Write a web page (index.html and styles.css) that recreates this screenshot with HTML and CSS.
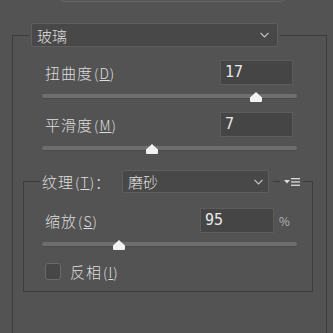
FILE: index.html
```html
<!DOCTYPE html>
<html lang="zh-CN">
<head>
  <meta charset="UTF-8" />
  <meta name="viewport" content="width=device-width, initial-scale=1" />
  <title>玻璃</title>
  <link rel="stylesheet" href="styles.css">
</head>
<body>
  <div class="top-edge"></div>

  <fieldset class="group">
    <legend class="group-title">
      <div class="select select-main">
        <span>玻璃</span>
        <svg class="chevron" width="9" height="6" viewBox="0 0 9 6"><polyline points="0.5,0.8 4.5,4.8 8.5,0.8" fill="none" stroke="#c4c4c4" stroke-width="1.2"/></svg>
      </div>
    </legend>

    <div class="field">
      <div class="field-row">
        <span class="label">扭曲度<span class="key">(<u>D</u>)</span></span>
        <div class="num">17</div>
      </div>
      <div class="slider">
        <div class="track"></div>
        <svg class="thumb" style="left: 84%" width="12" height="10" viewBox="0 0 12 10"><path d="M6 0 L12 5.5 L12 9 Q12 10 11 10 L1 10 Q0 10 0 9 L0 5.5 Z" fill="#f2f2f2"/></svg>
      </div>
    </div>

    <div class="field">
      <div class="field-row">
        <span class="label">平滑度<span class="key">(<u>M</u>)</span></span>
        <div class="num">7</div>
      </div>
      <div class="slider">
        <div class="track"></div>
        <svg class="thumb" style="left: 43%" width="12" height="10" viewBox="0 0 12 10"><path d="M6 0 L12 5.5 L12 9 Q12 10 11 10 L1 10 Q0 10 0 9 L0 5.5 Z" fill="#f2f2f2"/></svg>
      </div>
    </div>

    <fieldset class="group group-inner">
      <legend class="group-title texture-title">
        <span class="label">纹理<span class="key">(<u>T</u>)</span>：</span>
        <div class="select select-texture">
          <span>磨砂</span>
          <svg class="chevron" width="9" height="6" viewBox="0 0 9 6"><polyline points="0.5,0.8 4.5,4.8 8.5,0.8" fill="none" stroke="#c4c4c4" stroke-width="1.2"/></svg>
        </div>
        <span class="rule-bit"></span>
        <svg class="menu-icon" width="18" height="10" viewBox="0 0 18 10">
          <path d="M1 3 L7 3 L4 6.5 Z" fill="#dcdcdc"/>
          <rect x="8" y="1" width="9" height="1.3" fill="#dcdcdc"/>
          <rect x="8" y="4.3" width="9" height="1.3" fill="#dcdcdc"/>
          <rect x="8" y="7.6" width="9" height="1.3" fill="#dcdcdc"/>
        </svg>
      </legend>

      <div class="field">
        <div class="field-row">
          <span class="label">缩放<span class="key">(<u>S</u>)</span></span>
          <div class="num num-scale">95</div>
          <span class="unit">%</span>
        </div>
        <div class="slider">
          <div class="track"></div>
          <svg class="thumb" style="left: 30%" width="12" height="10" viewBox="0 0 12 10"><path d="M6 0 L12 5.5 L12 9 Q12 10 11 10 L1 10 Q0 10 0 9 L0 5.5 Z" fill="#f2f2f2"/></svg>
        </div>
        <label class="check">
          <span class="box"></span>
          <span class="label">反相<span class="key">(<u>I</u>)</span></span>
        </label>
      </div>
    </fieldset>
  </fieldset>
</body>
</html>
```

FILE: styles.css
```css
body {
  margin: 0;
  background-color: #535353;
  color: #dedede;
  font-family: "Noto Sans CJK SC", "Noto Sans", sans-serif;
  font-size: 15px;
  font-weight: 300;
  overflow: hidden;
}

.top-edge {
  height: 6px;
  margin: -5px 46px 0 58px;
  border: 1px solid #686868;
  border-top: none;
  border-radius: 0 0 7px 7px;
}

.group {
  margin: 21px 6px 0 12px;
  padding: 0 13px 80px 10px;
  border: 1px solid #3c3c3c;
  min-inline-size: 0;
}

.group-title {
  margin-left: 6px;
  padding: 0 2px;
  display: flex;
  align-items: center;
}

.select {
  display: flex;
  align-items: center;
  justify-content: space-between;
  box-sizing: border-box;
  background-color: #484848;
  border: 1px solid #5e5e5e;
  border-radius: 2px;
  padding: 0 8px 0 5px;
  line-height: 1;
}

.select-main {
  width: 247px;
  height: 24px;
}

.select-texture {
  width: 147px;
  height: 23px;
  margin-left: 11px;
  padding-right: 5px;
}

.chevron {
  display: block;
}

.field {
  margin: 13px 16px 0 19px;
}

.field + .field {
  margin-top: 10px;
}

.field-row {
  display: flex;
  align-items: center;
  justify-content: space-between;
}

.label {
  margin-left: 3px;
  letter-spacing: 1px;
  line-height: 1;
}

.key {
  font-size: 14px;
  letter-spacing: 1px;
  margin-left: 1px;
}

.num {
  box-sizing: border-box;
  width: 73px;
  height: 25px;
  margin-right: 4px;
  padding: 0 4px;
  background-color: #454545;
  border: 1px solid #5c5c5c;
  font-family: "DejaVu Sans Mono", monospace;
  font-size: 15px;
  line-height: 23px;
  color: #e8e8e8;
}

.num-scale {
  width: 74px;
  margin-left: auto;
  margin-right: 0;
}

.unit {
  width: 18px;
  margin-left: 5px;
  font-size: 12px;
  color: #d0d0d0;
}

.slider {
  position: relative;
  height: 10px;
  margin-top: 7px;
}

.track {
  position: relative;
  top: 2px;
  height: 4px;
  border-radius: 2px;
  background-color: #6e6e6e;
  box-shadow: 0 1px 0 #4a4a4a;
}

.thumb {
  position: absolute;
  top: 0;
  transform: translateX(-50%);
  display: block;
}

.group-inner {
  margin: 16px 0 0 0;
  padding: 0 0 11px 0;
}

.group-inner .group-title {
  margin-left: 16px;
}

.texture-title .label {
  margin-left: 0;
}

.group-inner .field {
  margin: 15px 15px 0 18px;
}

.rule-bit {
  width: 7px;
  height: 1px;
  margin-left: 4px;
  background-color: #3c3c3c;
}

.menu-icon {
  display: block;
  margin-left: 3px;
}

.check {
  display: flex;
  align-items: center;
  margin-top: 13px;
}

.box {
  box-sizing: border-box;
  width: 16px;
  height: 17px;
  margin-left: 3px;
  background-color: #474747;
  border: 1px solid #6a6a6a;
  border-radius: 3px;
}

.check .label {
  margin-left: 9px;
}
```
